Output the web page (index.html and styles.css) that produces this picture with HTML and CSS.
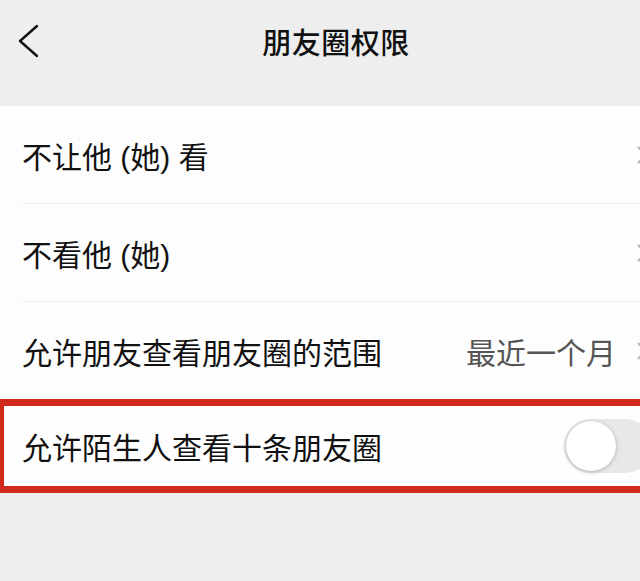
FILE: index.html
```html
<!DOCTYPE html>
<html lang="zh-CN">
<head>
  <meta charset="UTF-8" />
  <meta name="viewport" content="width=device-width, initial-scale=1.0"/>
  <title>朋友圈权限</title>
  <link rel="stylesheet" href="styles.css">
</head>
<body>
  <div class="screen">
    <header class="nav">
      <div class="nav-left">
        <svg class="back" width="24" height="34" viewBox="0 0 24 34">
          <polyline points="20,2 3,17 20,32" fill="none" stroke="#111" stroke-width="2.4" stroke-linecap="round" stroke-linejoin="round"/>
        </svg>
      </div>
      <h1 class="title">朋友圈权限</h1>
      <div></div>
    </header>

    <div class="list">
      <div class="row">
        <span class="label">不让他 (她) 看</span>
        <span class="arrow">
          <svg width="12" height="20" viewBox="0 0 12 20"><polyline points="2,2 10,10 2,18" fill="none" stroke="#b5b5b8" stroke-width="2"/></svg>
        </span>
      </div>
      <div class="row">
        <span class="label">不看他 (她)</span>
        <span class="arrow">
          <svg width="12" height="20" viewBox="0 0 12 20"><polyline points="2,2 10,10 2,18" fill="none" stroke="#b5b5b8" stroke-width="2"/></svg>
        </span>
      </div>
      <div class="row last">
        <span class="label">允许朋友查看朋友圈的范围</span>
        <span class="value">最近一个月</span>
        <span class="arrow">
          <svg width="12" height="20" viewBox="0 0 12 20"><polyline points="2,2 10,10 2,18" fill="none" stroke="#b5b5b8" stroke-width="2"/></svg>
        </span>
      </div>

      <div class="highlight">
        <div class="row">
          <span class="label">允许陌生人查看十条朋友圈</span>
          <span class="switch"><span class="knob"></span></span>
        </div>
      </div>
    </div>
  </div>
</body>
</html>
```

FILE: styles.css
```css
body {
  margin: 0;
  background: #eeeeef;
  font-family: "Liberation Sans", "Noto Sans CJK SC", sans-serif;
  color: #111;
  overflow: hidden;
}

.screen {
  width: 672px;
}

.nav {
  height: 82px;
  margin-bottom: 24px;
  display: grid;
  grid-template-columns: 1fr auto 1fr;
  align-items: center;
}

.nav-left {
  padding-left: 17px;
  display: flex;
  align-items: center;
}

.title {
  margin: 0;
  font-size: 29px;
  font-weight: 500;
  letter-spacing: 0.5px;
}

.list {
  background: #fdfdfd;
}

.row {
  height: 97px;
  margin-left: 22px;
  padding-right: 24px;
  display: flex;
  align-items: center;
  border-bottom: 1px solid #ececec;
  font-size: 30px;
}

.row.last {
  border-bottom: none;
}

.label {
  flex: 1;
}

.value {
  color: #555;
  margin-right: 20px;
}

.arrow {
  display: flex;
}

.highlight {
  border: 7px solid #d12a1b;
  border-left-width: 4px;
  background: #fefefe;
}

.highlight .row {
  height: 80px;
  margin-left: 18px;
  padding-right: 13px;
  border-bottom: none;
}

.switch {
  width: 88px;
  height: 54px;
  border-radius: 27px;
  background: #e8e8ea;
  display: flex;
  align-items: center;
  padding: 0 2px;
  box-sizing: border-box;
}

.knob {
  width: 50px;
  height: 50px;
  border-radius: 50%;
  background: #fff;
  box-shadow: 0 1px 4px rgba(0, 0, 0, 0.25);
}
```
